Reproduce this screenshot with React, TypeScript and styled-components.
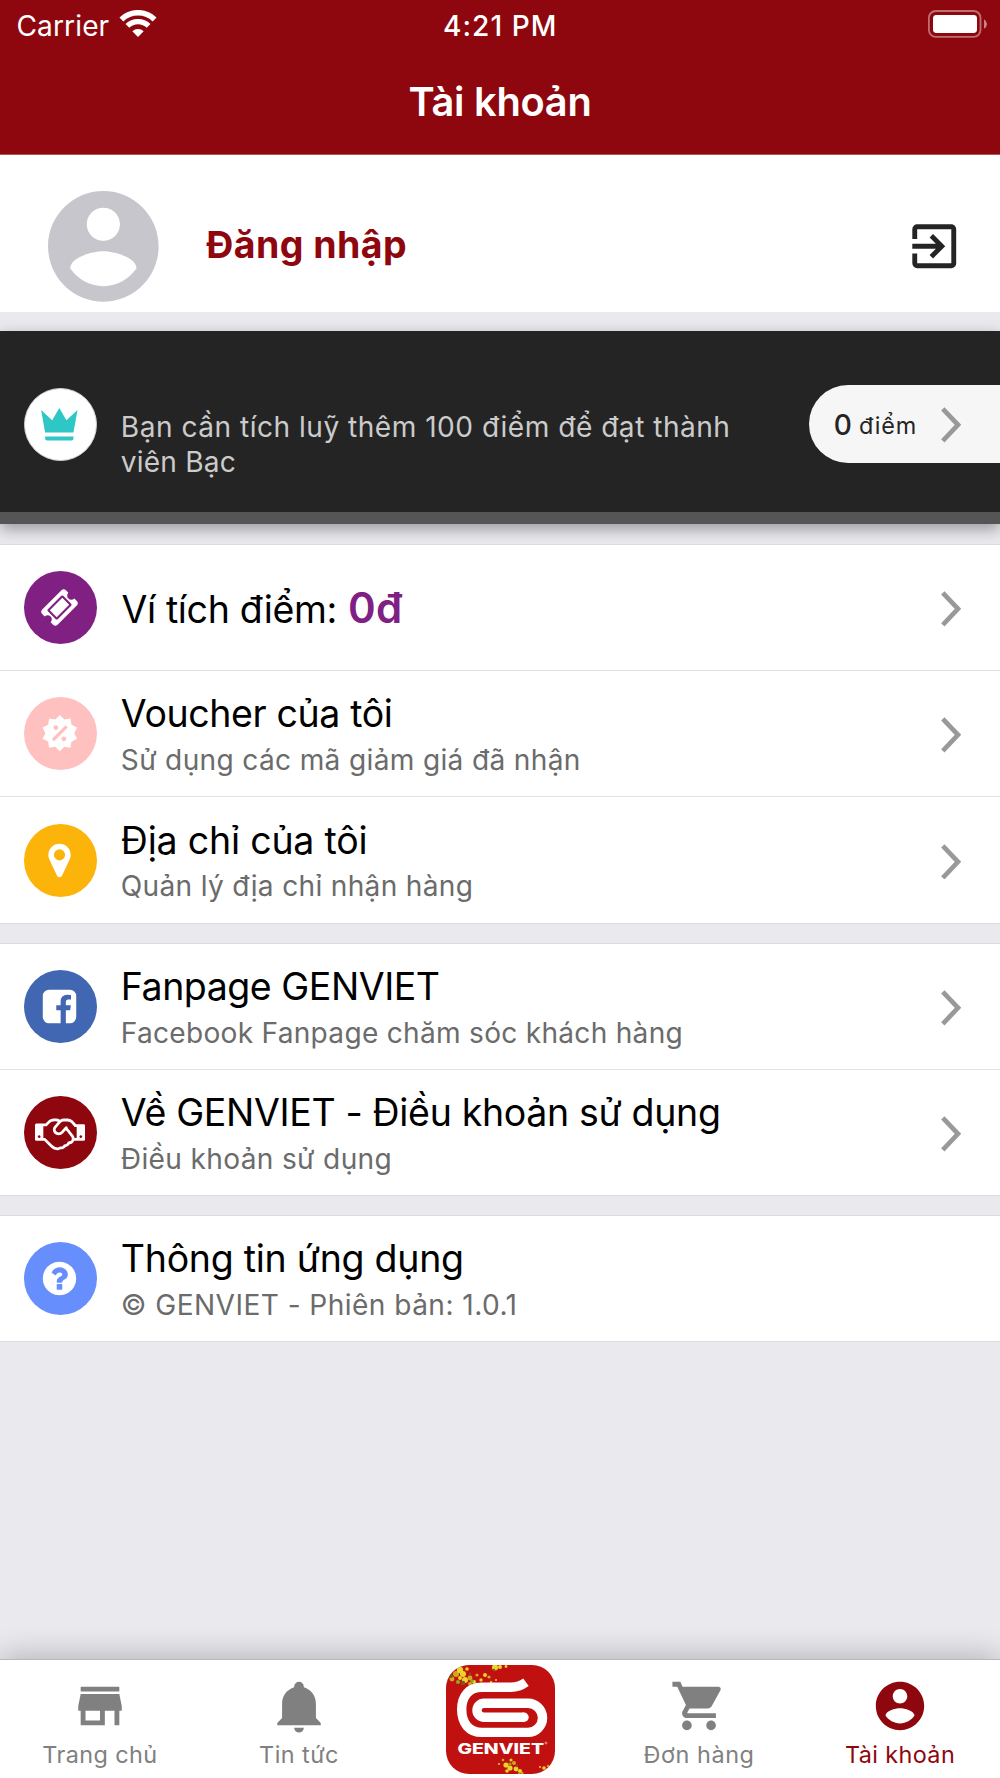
import React from 'react';
import styled, { createGlobalStyle } from 'styled-components';
import { MdExitToApp, MdShoppingCart, MdStore } from 'react-icons/md';

const brand = '#8e070e';

const GlobalStyle = createGlobalStyle`
  * { box-sizing: border-box; }
  html, body { margin: 0; padding: 0; }
  body { background: #e9e9ee; font-family: Inter, "Noto Sans", sans-serif; }
  svg { display: block; flex-shrink: 0; }
`;

const Screen = styled.div`
  display: flex;
  flex-direction: column;
  width: 1000px;
  height: 1778px;
  overflow: hidden;
  background: #e9e9ee;
`;

const Label = styled.span<{ $spacing?: number }>`
  white-space: nowrap;
  letter-spacing: ${p => p.$spacing ?? 0}px;
`;

/* Header */

const Header = styled.header`
  height: 155px;
  background: ${brand};
  border-bottom: 1px solid #b5555a;
  color: #fff;
`;

const StatusBar = styled.div`
  display: grid;
  grid-template-columns: 1fr auto 1fr;
  align-items: center;
  height: 51px;
  padding: 0 13px 0 16.5px;
  font-size: 28.1px;
  line-height: 36px;
`;

const Carrier = styled.div`
  display: flex;
  align-items: center;
  gap: 10px;
`;

const Clock = styled(Label)`
  margin-right: 3px;
  font-weight: 500;
`;

const Battery = styled.div`
  justify-self: end;
  margin-top: -3px;
`;

const PageTitle = styled.h1`
  display: flex;
  justify-content: center;
  align-items: center;
  height: 101px;
  margin: 0;
  font-size: 39.8px;
  font-weight: 600;
`;

/* Profile */

const Profile = styled.section`
  display: flex;
  align-items: center;
  height: 157px;
  padding: 25px 37px 0 36.6px;
  background: #fff;
`;

const LoginLabel = styled(Label)`
  flex: 1;
  margin: -3px 0 0 36.9px;
  color: ${brand};
  font-size: 37.5px;
  font-weight: 700;
  line-height: 46px;
`;

/* Membership */

const Membership = styled.section`
  display: flex;
  align-items: flex-start;
  height: 193px;
  margin-top: 19px;
  padding: 54px 0 0 24px;
  background: #242424;
  border-bottom: 12px solid #555;
  box-shadow: 0 5px 14px rgba(0, 0, 0, 0.34);
`;

const MembershipText = styled.p`
  flex: 1;
  margin: 25px 0 0 23.8px;
  color: #cbcbcb;
  font-size: 28.1px;
  line-height: 35px;
`;

const PointsPill = styled.div`
  display: flex;
  align-items: center;
  width: 191px;
  height: 77.5px;
  padding: 0 38px 0 24.8px;
  background: #f6f6f6;
  border-radius: 39px 0 0 39px;
  color: #242424;
`;

const PointsValue = styled.span`
  margin-top: 2px;
  font-size: 28.1px;
  font-weight: 500;
`;

const PointsUnit = styled(Label)`
  flex: 1;
  margin: 3px 0 0 7px;
  font-size: 23.4px;
`;

/* Lists */

const List = styled.section<{ $gap: number }>`
  margin-top: ${p => p.$gap}px;
  background: #fff;
  border-top: 1px solid #dcdce0;
  border-bottom: 1px solid #dcdce0;
`;

const Row = styled.div<{ $height?: number }>`
  display: flex;
  align-items: center;
  height: ${p => p.$height ?? 125}px;
  padding: 0 38px 0 24px;

  & + & { box-shadow: 0 -1px 0 #e3e3e6; margin-top: 1px; }
`;

const Disc = styled.div<{ $color: string; $outlined?: boolean }>`
  display: flex;
  justify-content: center;
  align-items: center;
  flex-shrink: 0;
  width: 73px;
  height: 73px;
  margin-top: ${p => (p.$outlined ? 3 : 0)}px;
  padding-right: 2px;
  border-radius: 50%;
  background: ${p => p.$color};
  border: ${p => (p.$outlined ? '1px solid #cfcfcf' : 'none')};
`;

const RowText = styled.div`
  display: flex;
  flex-direction: column;
  flex: 1;
  gap: 4.6px;
  margin: 2px 0 0 23.8px;
`;

const RowTitle = styled(Label)`
  color: #000;
  font-size: 37.5px;
  line-height: 46px;
`;

const RowSubtitle = styled(Label)`
  color: #6b6b6b;
  font-size: 28.1px;
  line-height: 36px;
`;

const WalletLine = styled.div`
  display: flex;
  align-items: baseline;
  flex: 1;
  gap: 11px;
  margin: 2px 0 0 24.4px;
`;

const WalletAmount = styled(Label)`
  color: #802083;
  font-size: 42px;
  font-weight: 600;
  line-height: 46px;
`;

const ChevronBox = styled.div`
  margin: 3px 1px 0 0;
`;

/* Tab bar */

const TabBar = styled.nav`
  display: grid;
  grid-template-columns: repeat(5, 200px);
  height: 119px;
  margin-top: auto;
  background: #fff;
  border-top: 1px solid #b9b9bd;
  box-shadow: 0 -3px 28px rgba(0, 0, 0, 0.24);
`;

const Tab = styled.div<{ $active?: boolean; $shift?: number }>`
  display: flex;
  flex-direction: column;
  align-items: center;
  gap: 5px;
  padding: 17px ${p => p.$shift ?? 0}px 0 0;
  color: ${p => (p.$active ? brand : '#808080')};
  font-size: 23.4px;
  line-height: 30px;
`;

const LogoTab = styled.div`
  display: flex;
  justify-content: center;
  padding-top: 5px;
`;

const Chevron = () => (
  <ChevronBox>
    <svg width="20.3" height="35.7" viewBox="0 0 20.3 35.7" fill="none" stroke="#999" strokeWidth="4.7">
      <path d="M1.8 1.8L17 17.85L1.8 33.9" />
    </svg>
  </ChevronBox>
);

const AccountIcon = ({ size, color }: { size: number; color: string }) => (
  <svg width={size} height={size} viewBox="0 0 24 24" fill={color}>
    <path d="M12 2C6.48 2 2 6.48 2 12s4.48 10 10 10 10-4.48 10-10S17.52 2 12 2zm0 3c1.66 0 3 1.34 3 3s-1.34 3-3 3-3-1.34-3-3 1.34-3 3-3zm0 14.2c-2.5 0-4.71-1.28-6-3.22.03-1.99 4-3.08 6-3.08 1.99 0 5.97 1.09 6 3.08-1.29 1.94-3.5 3.22-6 3.22z" />
  </svg>
);

const WifiIcon = () => (
  <svg width="38" height="28" viewBox="0 0 38 28" fill="none" stroke="#fff" style={{ marginTop: -4 }}>
    <path d="M2.4 9.4A24 24 0 0 1 35.6 9.4" strokeWidth="5.6" />
    <path d="M8.4 15.9A15.2 15.2 0 0 1 29.6 15.9" strokeWidth="5.4" />
    <path d="M13.3 21.3A8.2 8.2 0 0 1 24.7 21.3L19 27Z" fill="#fff" stroke="none" />
  </svg>
);

const BatteryIcon = () => (
  <svg width="59" height="28" viewBox="0 0 59 28">
    <rect x="0.9" y="1" width="51.6" height="25.8" rx="6.8" fill="none" stroke="#fff" strokeOpacity="0.42" strokeWidth="1.8" />
    <rect x="5" y="5" width="44" height="18" rx="3.4" fill="#fff" />
    <path d="M56 9.2Q59 11 59 14Q59 17 56 18.8Z" fill="#fff" fillOpacity="0.5" />
  </svg>
);

const CrownIcon = () => (
  <svg width="48.6" height="48.6" viewBox="0 0 24 24" fill="#2fc6c6">
    <path d="M5 16L3 5L8.5 10L12 4L15.5 10L21 5L19 16H5M19 19A1 1 0 0 1 18 20H6A1 1 0 0 1 5 19V18H19V19Z" />
  </svg>
);

const SaleIcon = () => (
  <svg width="38.4" height="38.4" viewBox="-0.4 0 24 24" fill="#fff">
    <path d="M18.65,2.85L19.26,6.71L22.77,8.5L21,12L22.78,15.5L19.24,17.29L18.63,21.15L14.74,20.54L11.97,23.3L9.19,20.5L5.33,21.14L4.71,17.25L1.22,15.47L3,11.97L1.23,8.5L4.74,6.69L5.35,2.86L9.22,3.5L12,0.69L14.77,3.46L18.65,2.85M9.5,7A1.5,1.5 0 0,0 8,8.5A1.5,1.5 0 0,0 9.5,10A1.5,1.5 0 0,0 11,8.5A1.5,1.5 0 0,0 9.5,7M14.5,14A1.5,1.5 0 0,0 13,15.5A1.5,1.5 0 0,0 14.5,17A1.5,1.5 0 0,0 16,15.5A1.5,1.5 0 0,0 14.5,14M8.41,17L17,8.41L15.59,7L7,15.59L8.41,17Z" />
  </svg>
);

const BellIcon = () => (
  <svg width="58" height="58" viewBox="0 0 24 24" fill="currentColor">
    <path d="M21,19V20H3V19L5,17V11C5,7.9 7.03,5.17 10,4.29C10,4.19 10,4.1 10,4A2,2 0 0,1 12,2A2,2 0 0,1 14,4C14,4.1 14,4.19 14,4.29C16.97,5.17 19,7.9 19,11V17L21,19M14,21A2,2 0 0,1 12,23A2,2 0 0,1 10,21" />
  </svg>
);

const glyphs = {
  ticket:
    'M1024 452l316 316-572 572-316-316zm-211 979l618-618q19-19 19-45t-19-45l-362-362q-18-18-45-18t-45 18l-618 618q-19 19-19 45t19 45l362 362q18 18 45 18t45-18zm889-637l-907 908q-37 37-90.5 37t-90.5-37l-126-126q56-56 56-136t-56-136-136-56-136 56l-125-126q-37-37-37-90.5t37-90.5l907-906q37-37 90.5-37t90.5 37l125 125q-56 56-56 136t56 136 136 56 136-56l126 125q37 37 37 90.5t-37 90.5z',
  pin: 'M1152 640q0-106-75-181t-181-75-181 75-75 181 75 181 181 75 181-75 75-181zm256 0q0 109-33 179l-364 774q-16 33-47.5 52t-67.5 19-67.5-19-46.5-52l-365-774q-33-70-33-179 0-212 150-362t362-150 362 150 150 362z',
  facebook:
    'M1376 128q119 0 203.5 84.5t84.5 203.5v960q0 119-84.5 203.5t-203.5 84.5h-188v-595h199l30-232h-229v-148q0-56 23.5-84t91.5-28l122-1v-207q-63-9-178-9-136 0-217.5 80t-81.5 226v171h-200v232h200v595h-532q-119 0-203.5-84.5t-84.5-203.5v-960q0-119 84.5-203.5t203.5-84.5h960z',
  handshake:
    'M192 1152q40 0 56-32t0-64-56-32-56 32 0 64 56 32zM1665 1094q-10-13-38.5-50t-41.5-54-38-49-42.5-53-40.5-47-45-49l-125 140q-83 94-208.5 92t-205.5-98q-57-69-56.5-158t58.5-157l177-206q-22-11-51-16.5t-47.5-6-56.5.5-49 1q-92 0-158 66l-158 158h-155v544q5 0 21-.5t22 0 19.5 2 20.5 4.5 17.5 8.5 18.5 13.5l297 292q115 111 227 111 78 0 125-47 57 20 112.5-8t72.5-85q74 6 127-44 20-18 36-45.5t14-50.5q10 10 43 10 43 0 77-21t49.5-53 12-71.5-30.5-73.5zM1824 1152h96v-512h-93l-157-180q-66-76-169-76h-167q-89 0-146 67l-209 243q-28 33-28 75t27 75q43 51 110 52t111-49l193-218q25-23 53.5-21.5t47 27 8.5 56.5q16 19 56 63t60 68q29 36 82.5 105.5t64.5 84.5q52 66 60 140zM2112 1152q40 0 56-32t0-64-56-32-56 32 0 64 56 32zM2304 576v640q0 26-19 45t-45 19h-434q-27 65-82 106.5t-125 51.5q-33 48-80.5 81.5t-102.5 45.5q-42 53-104.5 81.5t-128.5 24.5q-60 34-126 39.5t-127.5-14-117-53.5-103.5-81l-287-282h-358q-26 0-45-19t-19-45v-672q0-26 19-45t45-19h421q14-14 47-48t47.5-48 44-40 50.5-37.5 51-25.5 62-19.5 68-5.5h117q99 0 181 56 82-56 181-56h167q35 0 67 6t56.5 14.5 51.5 26.5 44.5 31 43 39.5 39 42 41 48 41.5 48.5h355q26 0 45 19t19 45z',
  question:
    'M1024 1376v-192q0-14-9-23t-23-9h-192q-14 0-23 9t-9 23v192q0 14 9 23t23 9h192q14 0 23-9t9-23zm256-672q0-88-55.5-163t-138.5-116-170-41q-243 0-371 213-15 24 8 42l132 100q7 6 19 6 16 0 25-12 53-68 86-92 34-24 86-24 48 0 85.5 26t37.5 59q0 38-20 61t-68 45q-63 28-115.5 86.5t-52.5 125.5v36q0 14 9 23t23 9h192q14 0 23-9t9-23q0-19 21.5-49.5t54.5-49.5q32-18 49-28.5t46-35 44.5-48 28-60.5 12.5-81zm384 192q0 209-103 385.5t-279.5 279.5-385.5 103-385.5-103-279.5-279.5-103-385.5 103-385.5 279.5-279.5 385.5-103 385.5 103 279.5 279.5 103 385.5z',
};

const Glyph = ({ name, wide }: { name: keyof typeof glyphs; wide?: boolean }) => (
  <svg width={wide ? 50 : 39} height="39" viewBox={wide ? '0 0 2304 1792' : '0 0 1792 1792'} fill="#fff">
    <path d={glyphs[name]} />
  </svg>
);

const petals: [number, number, number][] = [
  [10, 9, 3], [14, 5, 3.2], [17, 9, 3], [6, 14, 2.4], [19, 15, 3], [14, 13, 2], [24, 13, 2.4], [28, 17, 2], [21, 4, 1.8],
  [31, 10, 1.6], [35, 15, 1.7], [39, 10, 2], [43, 12, 1.6], [49, 2.4, 3], [54, 2, 2], [45, 17, 1.3], [50, 15, 1],
  [60, 1.5, 1.4], [24, 19, 2], [60, 100, 2.6], [64, 103, 2.6], [68, 98, 2], [70, 104, 2.4], [65, 95, 1.6], [57, 95, 1.3],
  [74, 106, 2], [61, 106, 1.8], [76, 108, 1.5], [53, 99, 1], [98, 103, 1.8], [102, 101, 1.2], [94, 102, 1], [100, 106, 1],
];

const leaves: [number, number, number][] = [
  [5, 11, 2], [12, 17, 2], [17, 18, 2.2], [26, 16, 1.8], [24, 9, 1.2], [30, 19, 1.5], [48, 5, 1.2], [64, 99, 1.6], [71, 101, 1.2], [73, 109, 1.3],
];

const Logo = () => (
  <svg width="109" height="109" viewBox="0 0 109 109">
    <defs>
      <clipPath id="tile"><rect width="109" height="109" rx="23" /></clipPath>
    </defs>
    <g clipPath="url(#tile)">
      <rect width="109" height="109" fill="#c01110" />
      {petals.map(([x, y, r], i) => <circle key={i} cx={x} cy={y} r={r} fill={i % 3 ? '#ecd52a' : '#d3a622'} />)}
      {leaves.map(([x, y, r], i) => <circle key={i} cx={x} cy={y} r={r} fill={i % 2 ? '#93a822' : '#7a5a14'} />)}
      <path
        d="M80 17.3Q73 22.3 65 22.3H36C23 22.3 15.7 31 15.7 44.6S23 67.4 36 67.4H82A14.5 14.5 0 0 0 82 38.3H38A7 7 0 0 0 38 52.3H78"
        fill="none"
        stroke="#fff"
        strokeWidth="9.4"
      />
      <circle cx="78" cy="52.3" r="4.7" fill="#fff" />
      <text x="11.5" y="89" fill="#fff" fontFamily="Inter, sans-serif" fontSize="14.6" fontWeight="800" textLength="86.5" lengthAdjust="spacingAndGlyphs">GENVIET</text>
      <circle cx="100" cy="78" r="1" fill="none" stroke="#fff" strokeWidth="0.5" />
    </g>
  </svg>
);

type Item = { color: string; icon: React.ReactNode; title: string; spacing: number; subtitle: string; subSpacing: number; plain?: boolean; height?: number };

const MenuRow = ({ item }: { item: Item }) => (
  <Row $height={item.height}>
    <Disc $color={item.color}>{item.icon}</Disc>
    <RowText>
      <RowTitle $spacing={item.spacing}>{item.title}</RowTitle>
      <RowSubtitle $spacing={item.subSpacing}>{item.subtitle}</RowSubtitle>
    </RowText>
    {!item.plain && <Chevron />}
  </Row>
);

const personal: Item[] = [
  { color: '#ffc1bf', icon: <SaleIcon />, title: 'Voucher của tôi', spacing: -0.38, subtitle: 'Sử dụng các mã giảm giá đã nhận', subSpacing: 0.33 },
  { color: '#fcb30a', icon: <Glyph name="pin" />, title: 'Địa chỉ của tôi', spacing: -0.2, subtitle: 'Quản lý địa chỉ nhận hàng', subSpacing: 0.31, height: 126 },
];

const company: Item[] = [
  { color: '#4167b2', icon: <Glyph name="facebook" />, title: 'Fanpage GENVIET', spacing: -0.46, subtitle: 'Facebook Fanpage chăm sóc khách hàng', subSpacing: 0.27 },
  { color: brand, icon: <Glyph name="handshake" wide />, title: 'Về GENVIET - Điều khoản sử dụng', spacing: -0.335, subtitle: 'Điều khoản sử dụng', subSpacing: 0.34 },
];

const about: Item = { color: '#678efd', icon: <Glyph name="question" />, title: 'Thông tin ứng dụng', spacing: -0.27, subtitle: '© GENVIET - Phiên bản: 1.0.1', subSpacing: 0.44, plain: true };

export default function App() {
  return (
    <Screen>
      <GlobalStyle />
      <Header>
        <StatusBar>
          <Carrier><Label $spacing={0.1}>Carrier</Label><WifiIcon /></Carrier>
          <Clock $spacing={1.05}>4:21 PM</Clock>
          <Battery><BatteryIcon /></Battery>
        </StatusBar>
        <PageTitle><Label $spacing={-0.27}>Tài khoản</Label></PageTitle>
      </Header>

      <Profile>
        <AccountIcon size={132.7} color="#c7c6cd" />
        <LoginLabel $spacing={0.45}>Đăng nhập</LoginLabel>
        <MdExitToApp size={58.5} color="#242424" />
      </Profile>

      <Membership>
        <Disc $color="#fff" $outlined><CrownIcon /></Disc>
        <MembershipText>
          <Label $spacing={0.49}>Bạn cần tích luỹ thêm 100 điểm để đạt thành</Label><br />
          <Label $spacing={0.2}>viên Bạc</Label>
        </MembershipText>
        <PointsPill>
          <PointsValue>0</PointsValue>
          <PointsUnit $spacing={0.8}>điểm</PointsUnit>
          <Chevron />
        </PointsPill>
      </Membership>

      <List $gap={20}>
        <Row>
          <Disc $color="#802083"><Glyph name="ticket" /></Disc>
          <WalletLine>
            <RowTitle $spacing={-0.33}>Ví tích điểm:</RowTitle>
            <WalletAmount $spacing={0.29}>0đ</WalletAmount>
          </WalletLine>
          <Chevron />
        </Row>
        {personal.map(item => <MenuRow key={item.title} item={item} />)}
      </List>
      <List $gap={19}>{company.map(item => <MenuRow key={item.title} item={item} />)}</List>
      <List $gap={19}><MenuRow item={about} /></List>

      <TabBar>
        <Tab><MdStore size={58} /><Label $spacing={0.42}>Trang chủ</Label></Tab>
        <Tab $shift={2}><BellIcon /><Label $spacing={0.45}>Tin tức</Label></Tab>
        <LogoTab><Logo /></LogoTab>
        <Tab $shift={2}><MdShoppingCart size={58} /><Label $spacing={0.57}>Đơn hàng</Label></Tab>
        <Tab $active><AccountIcon size={58} color={brand} /><Label $spacing={0.4}>Tài khoản</Label></Tab>
      </TabBar>
    </Screen>
  );
}
